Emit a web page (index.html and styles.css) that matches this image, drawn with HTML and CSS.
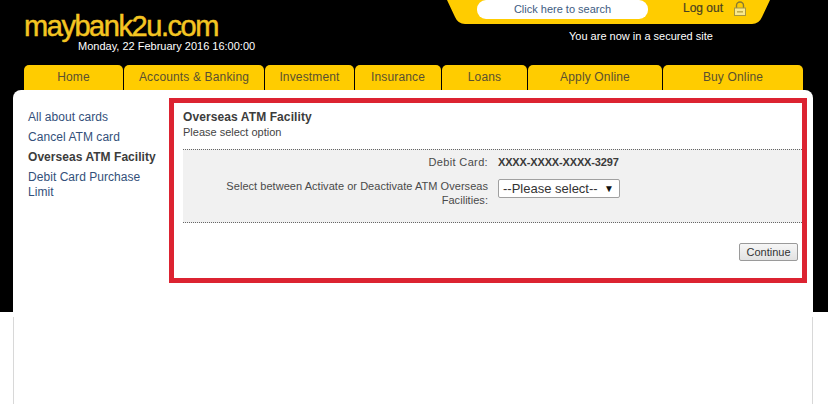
FILE: index.html
```html
<!DOCTYPE html>
<html lang="en">
<head>
<meta charset="utf-8">
<title>Overseas ATM Facility</title>
<link rel="stylesheet" href="styles.css">
</head>
<body>
<div class="page">
  <header class="header">
    <div class="brand">
      <div class="logo">maybank2u.com</div>
      <div class="date">Monday, 22 February 2016 16:00:00</div>
    </div>
    <div class="tools">
      <div class="toolbar">
        <a class="search">Click here to search</a>
        <a class="logout">Log out</a>
        <svg class="lock" width="14" height="15" viewBox="0 0 14 15" aria-hidden="true">
          <path d="M3.5 7V4.5a3.5 3.5 0 0 1 7 0V7" fill="none" stroke="#8a7a30" stroke-width="1.4"/>
          <rect x="1.5" y="7" width="11" height="7.5" fill="#f9e88c" stroke="#a89640" stroke-width="1"/>
          <rect x="4" y="10" width="6" height="1.6" fill="#c2ae48"/>
        </svg>
      </div>
      <div class="secure">You are now in a secured site</div>
    </div>
  </header>
  <nav class="tabs">
    <a class="tab tab-home">Home</a>
    <a class="tab tab-accounts">Accounts &amp; Banking</a>
    <a class="tab tab-invest">Investment</a>
    <a class="tab tab-insure">Insurance</a>
    <a class="tab tab-loans">Loans</a>
    <a class="tab tab-apply">Apply Online</a>
    <a class="tab tab-buy">Buy Online</a>
  </nav>
  <div class="panel">
    <aside class="side">
      <a class="side-link">All about cards</a>
      <a class="side-link">Cancel ATM card</a>
      <a class="side-link current">Overseas ATM Facility</a>
      <a class="side-link">Debit Card Purchase Limit</a>
    </aside>
    <main class="box">
      <h1 class="title">Overseas ATM Facility</h1>
      <p class="sub">Please select option</p>
      <div class="form">
        <div class="row row-card">
          <div class="label label-card">Debit Card:</div>
          <div class="value">XXXX-XXXX-XXXX-3297</div>
        </div>
        <div class="row">
          <div class="label label-wrap">Select between Activate or Deactivate ATM Overseas Facilities:</div>
          <div class="select"><span>--Please select--</span><i class="arrow">▼</i></div>
        </div>
      </div>
      <div class="actions"><button class="btn" type="button">Continue</button></div>
    </main>
  </div>
</div>
</body>
</html>
```
FILE: styles.css
```css
* { box-sizing: border-box; }
html, body { margin: 0; padding: 0; }
body {
  width: 828px;
  height: 404px;
  overflow: hidden;
  background: #fff;
  font-family: "Liberation Sans", Arial, sans-serif;
}
.page {
  height: 404px;
  background: linear-gradient(#000 312px, #fff 312px);
}
.header {
  display: flex;
  height: 65px;
}
.brand {
  width: 447px;
  padding: 13px 0 0 24px;
}
.logo {
  color: #f4c522;
  font-size: 29px;
  line-height: 27px;
  height: 27px;
  letter-spacing: -1.45px;
  -webkit-text-stroke: 0.5px #f4c522;
  white-space: nowrap;
}
.date {
  color: #fff;
  font-size: 11px;
  line-height: 13px;
  margin: 0 0 0 54px;
  white-space: nowrap;
}
.tools { width: 323px; }
.toolbar {
  display: flex;
  align-items: flex-start;
  width: 323px;
  height: 24px;
  padding-left: 30px;
  background: #ffcc00;
  clip-path: path("M0 0H323L315 17Q312 24 305 24H18Q11 24 8 17Z");
}
.search {
  width: 171px;
  height: 19px;
  border-radius: 9px;
  background: #fff;
  color: #3e5c82;
  font-size: 11px;
  line-height: 19px;
  text-align: center;
}
.logout {
  margin-left: 35px;
  color: #4a4220;
  font-size: 12px;
  line-height: 16px;
  -webkit-text-stroke: 0.2px #4a4220;
}
.lock { margin: 1px 0 0 10px; }
.secure {
  color: #fff;
  font-size: 11px;
  line-height: 13px;
  margin: 6px 0 0 122px;
  white-space: nowrap;
}
.tabs {
  display: flex;
  gap: 1px;
  height: 25px;
  margin-left: 24px;
}
.tab {
  height: 25px;
  background: #ffcc00;
  border-radius: 5px 5px 0 0;
  color: #5a5030;
  font-size: 12px;
  line-height: 24px;
  letter-spacing: 0.15px;
  text-align: center;
}
.tab-home { width: 99px; }
.tab-accounts { width: 140px; }
.tab-invest { width: 89px; }
.tab-insure { width: 86px; }
.tab-loans { width: 85px; }
.tab-apply { width: 134px; }
.tab-buy { width: 140px; }
.panel {
  position: relative;
  display: flex;
  align-items: flex-start;
  width: 800px;
  height: 314px;
  margin-left: 13px;
  padding: 8px 6px 0 15px;
  background: #fff;
  border-radius: 8px 8px 0 0;
}
.panel::before,
.panel::after {
  content: "";
  position: absolute;
  top: 227px;
  bottom: 0;
  width: 1px;
  background: #d8d8d8;
}
.panel::before { left: 0; }
.panel::after { right: 0; }
.side {
  display: flex;
  flex-direction: column;
  gap: 5px;
  width: 141px;
  padding-top: 12px;
}
.side-link {
  color: #33507a;
  font-size: 12px;
  line-height: 15px;
  letter-spacing: 0.05px;
}
.side-link.current {
  color: #3c3c3c;
  font-weight: bold;
}
.box {
  width: 638px;
  height: 185px;
  border: 5px solid #dc2331;
  padding: 7px 0 0 9px;
}
.title {
  margin: 0;
  color: #3c3c3c;
  font-size: 12px;
  line-height: 15px;
  font-weight: bold;
  letter-spacing: 0.1px;
}
.sub {
  margin: 0;
  color: #444;
  font-size: 11px;
  line-height: 14px;
}
.form {
  height: 74px;
  margin-top: 10px;
  padding-top: 5px;
  background: #f1f1f1;
  border-top: 1px dotted #666;
  border-bottom: 1px dotted #666;
}
.row {
  display: flex;
  align-items: flex-start;
  gap: 10px;
}
.row-card { margin-bottom: 9px; }
.label {
  width: 305px;
  color: #4a4a4a;
  font-size: 11px;
  line-height: 14px;
  letter-spacing: 0.04px;
  text-align: right;
}
.label-card { letter-spacing: 0.35px; }
.label-wrap { padding: 0 0 0 33px; }
.row-card .label, .value { line-height: 15px; }
.value {
  color: #3a3a3a;
  font-size: 11px;
  font-weight: bold;
  letter-spacing: -0.15px;
}
.select {
  display: flex;
  align-items: center;
  justify-content: space-between;
  width: 122px;
  height: 19px;
  padding: 0 5px 0 4px;
  background: #fff;
  border: 1px solid #a0a0a0;
  border-radius: 2px;
  color: #333;
  font-size: 13px;
}
.arrow {
  color: #111;
  font-size: 10px;
  font-style: normal;
}
.actions {
  display: flex;
  justify-content: flex-end;
  margin-top: 20px;
  padding-right: 4px;
}
.btn {
  width: 59px;
  height: 18px;
  padding: 0;
  background: linear-gradient(#f6f6f6, #e2e2e2);
  border: 1px solid #9a9a9a;
  border-radius: 2px;
  color: #333;
  font-family: inherit;
  font-size: 11px;
  line-height: 16px;
}
```
